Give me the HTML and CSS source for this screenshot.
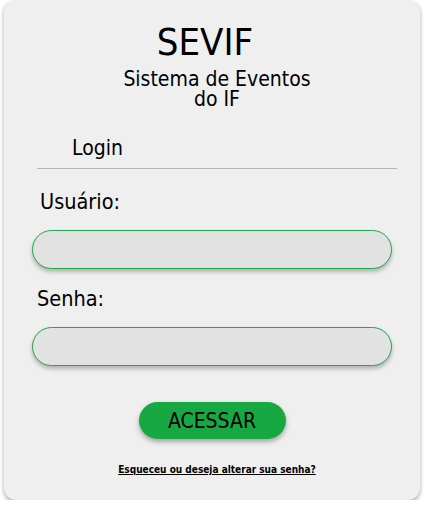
FILE: index.html
```html
<!DOCTYPE html>
<html lang="pt">
<head>
<meta charset="utf-8">
<link rel="stylesheet" href="styles.css">
</head>
<body>
<main class="card">
  <header class="brand">
    <h1 class="title">SEVIF</h1>
    <p class="subtitle"><span class="sub-line">Sistema de Eventos</span><span class="sub-line">do IF</span></p>
  </header>
  <div class="tab">
    <span class="tab-label">Login</span>
  </div>
  <form class="form">
    <label class="label label-user">Usuário:</label>
    <input class="field field-user" type="text">
    <label class="label label-pass">Senha:</label>
    <input class="field" type="password">
    <div class="actions">
      <button class="btn" type="button">ACESSAR</button>
    </div>
    <a class="link" href="#">Esqueceu ou deseja alterar sua senha?</a>
  </form>
</main>
</body>
</html>
```
FILE: styles.css
```css
* { box-sizing: border-box; }
html, body { margin: 0; padding: 0; background: #ffffff; }
body {
  font-family: "DejaVu Sans Condensed", "DejaVu Sans", sans-serif;
  color: #000;
  padding: 0 4px;
}
.card {
  width: 416px;
  height: 500px;
  background: #efefef;
  border-radius: 12px;
  box-shadow: 0 2px 4px rgba(0,0,0,0.35);
  padding-top: 20px;
  display: flex;
  flex-direction: column;
}
.brand { text-align: center; }
.title {
  margin: 0 0 0 -14px;
  font-size: 38px;
  font-weight: 400;
  line-height: 44px;
}
.subtitle {
  margin: 5px 0 0 10px;
  font-size: 21px;
  display: flex;
  flex-direction: column;
  align-items: center;
}
.sub-line {
  display: block;
  height: 20px;
  line-height: 20px;
}
.tab {
  margin: 27px 23px 0 33px;
  border-bottom: 1px solid #b5b5b5;
  padding: 0 0 8px 35px;
}
.tab-label { font-size: 21px; line-height: 24px; }
.form {
  display: flex;
  flex-direction: column;
  padding: 0 28px;
}
.label { font-size: 21.5px; line-height: 24px; }
.label-user { margin: 21px 0 0 8px; }
.label-pass { margin: 18px 0 0 5px; }
.field {
  margin-top: 16px;
  height: 39px;
  width: 360px;
  border: 1px solid #1fa84a;
  border-radius: 20px;
  background: #e2e2e2;
  box-shadow: 0 3px 4px rgba(0,0,0,0.25);
  outline: none;
}
.actions { display: flex; justify-content: center; margin-top: 36px; }
.btn {
  width: 147px;
  height: 37px;
  border: none;
  border-radius: 19px;
  background: #17a843;
  color: #000;
  font-family: inherit;
  font-size: 21px;
  box-shadow: 0 3px 5px rgba(0,0,0,0.3);
  padding: 0;
}
.link {
  align-self: center;
  margin: 25px 0 0 10px;
  color: #000;
  font-size: 10px;
  font-weight: 700;
  text-decoration: underline;
}
```
